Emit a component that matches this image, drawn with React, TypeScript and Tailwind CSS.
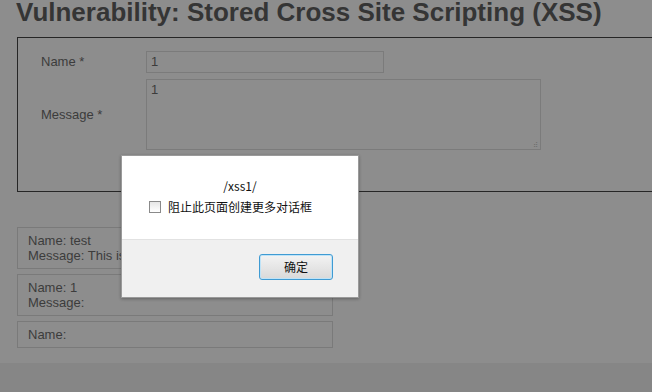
import React from "react";

export default function App() {
  return (
    <div className="relative w-[652px] h-[392px] overflow-hidden bg-[#8d8d8d] font-['Liberation_Sans',Arial,sans-serif] text-[#3c3c3c]">
      <div className="h-[363px]">
        <h1 className="pl-[16px] h-[37px] text-[26px] leading-[24px] font-bold text-[#353535]">
          Vulnerability: Stored Cross Site Scripting (XSS)
        </h1>
        <div className="ml-[17px] w-[700px] h-[155px] border border-[#262626] pt-[13px] pl-[23px] text-[13px]">
          <div className="flex items-center h-[22px]">
            <div className="w-[105px]">Name *</div>
            <div className="w-[238px] h-[22px] border border-[#7b7b7b] pl-[4px] leading-[20px]">1</div>
          </div>
          <div className="flex items-center mt-[6px] h-[71px] relative">
            <div className="w-[105px]">Message *</div>
            <div className="relative w-[395px] h-[71px] border border-[#7b7b7b] pl-[4px] pt-[2px] leading-[16px]">
              1
              <div className="absolute right-[2px] bottom-[2px] text-[#6e6e6e] text-[7px] leading-[7px]">⣴</div>
            </div>
          </div>
        </div>
        <div className="ml-[17px] mt-[35px] w-[316px] flex flex-col gap-[5px] text-[13px] leading-[15px]">
          <div className="h-[42px] border border-[#7a7a7a] pl-[10px] pt-[5px]">
            <div>Name: test</div>
            <div>Message: This is a test comment.</div>
          </div>
          <div className="h-[42px] border border-[#7a7a7a] pl-[10px] pt-[5px]">
            <div>Name: 1</div>
            <div>Message:</div>
          </div>
          <div className="h-[27px] border border-[#7a7a7a] pl-[10px] pt-[5px]">
            <div>Name:</div>
          </div>
        </div>
      </div>
      <div className="h-[29px] bg-[#868686]" />

      <div className="absolute left-[121px] top-[155px] w-[238px] h-[143px] bg-[#f0f0f0] border border-[#9a9a9a] shadow-[0_1px_3px_rgba(0,0,0,0.3)] font-['Noto_Sans_CJK_SC',sans-serif] text-[12px] text-black">
        <div className="h-[84px] bg-white border-b border-[#e2e2e2] pt-[21px]">
          <div className="text-center leading-[18px] text-[#111]">/xss1/</div>
          <div className="flex items-center mt-[3px] pl-[27px] h-[18px]">
            <div className="w-[12px] h-[12px] border border-[#8a8a8a] bg-gradient-to-b from-[#e6e6e6] to-[#ffffff]" />
            <span className="ml-[7px] leading-[18px] text-[#111]">阻止此页面创建更多对话框</span>
          </div>
        </div>
        <div className="flex justify-end pr-[25px] pt-[14px]">
          <div className="w-[74px] h-[26px] rounded-[3px] border border-[#3f9bd3] bg-gradient-to-b from-[#f3f3f3] to-[#d9d9d9] shadow-[inset_0_0_0_1px_#bfe3f7] flex items-center justify-center text-[12px] text-[#111]">
            确定
          </div>
        </div>
      </div>
    </div>
  );
}
